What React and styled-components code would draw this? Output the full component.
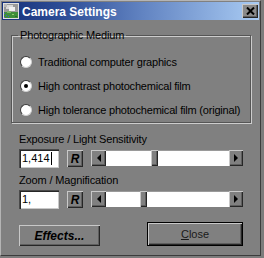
import React from 'react';
import styled, { createGlobalStyle } from 'styled-components';

const GlobalStyle = createGlobalStyle`
  html, body {
    margin: 0;
    background: #7c7c7c;
  }
  body {
    font-family: 'Liberation Sans', Arial, sans-serif;
    color: #000;
  }
`;

const raised = `
  background: #808080;
  box-shadow: inset 1px 1px 0 #c8c8c8, inset -1px -1px 0 #262626, inset -2px -2px 0 #5e5e5e;
`;

const sunken = `
  box-shadow: inset 1px 1px 0 #4a4a4a, inset 2px 2px 0 #262626, inset -1px -1px 0 #c8c8c8;
`;

const Window = styled.div`
  width: 261px;
  height: 256px;
  box-sizing: border-box;
  padding: 1px 0 0 1px;
  background: #808080;
  display: flex;
  flex-direction: column;
  border-left: 1px solid #b4b4b4;
  border-top: 1px solid #b4b4b4;
  border-right: 1px solid #3c3c3c;
  border-bottom: 1px solid #3c3c3c;
`;

const TitleBar = styled.div`
  width: 257px;
  height: 18px;
  display: flex;
  align-items: center;
  padding: 0 1px 0 1px;
  box-sizing: border-box;
  background: linear-gradient(90deg, #16317a 0%, #2f4f98 25%, #6284c2 55%, #a9cbf3 100%);
`;

const Title = styled.div`
  flex: 1;
  margin-left: 3px;
  padding-top: 2px;
  font-size: 12px;
  font-weight: bold;
  line-height: 14px;
  color: #fff;
  white-space: nowrap;
`;

const CloseBox = styled.div`
  width: 16px;
  height: 14px;
  display: flex;
  align-items: center;
  justify-content: center;
  ${raised}
  background: #8a8a8a;
`;

const Body = styled.div`
  display: flex;
  flex-direction: column;
  padding: 9px 0 0 9px;
`;

const Group = styled.fieldset`
  width: 240px;
  box-sizing: border-box;
  margin: 0;
  padding: 0 0 0 6px;
  border: 1px solid #565656;
  box-shadow: inset 1px 1px 0 #cdcdcd, 1px 1px 0 #cdcdcd;
`;

const Legend = styled.legend`
  padding: 0 2px;
  font-size: 11px;
  letter-spacing: -0.15px;
  line-height: 13px;
`;

const RadioList = styled.div`
  display: flex;
  flex-direction: column;
  padding-top: 8px;
`;

const RadioRow = styled.div`
  height: 24px;
  display: flex;
  align-items: center;
  padding-left: 2px;
  font-size: 11px;
  letter-spacing: -0.2px;
  gap: 6px;
  white-space: nowrap;
`;

const RadioDot = styled.span`
  width: 12px;
  height: 12px;
  border-radius: 50%;
  box-sizing: border-box;
  background: #fff;
  border: 1px solid;
  border-color: #3a3a3a #d0d0d0 #d0d0d0 #3a3a3a;
  display: flex;
  align-items: center;
  justify-content: center;

  &::after {
    content: '';
    width: 4px;
    height: 4px;
    border-radius: 50%;
    background: ${p => (p.$checked ? '#000' : 'transparent')};
  }
`;

const Section = styled.div`
  margin-left: 8px;
  display: flex;
  flex-direction: column;
`;

const Label = styled.div`
  margin-top: ${p => p.$top}px;
  font-size: 11px;
  letter-spacing: -0.15px;
  line-height: 13px;
  white-space: nowrap;
`;

const Row = styled.div`
  display: flex;
  align-items: flex-start;
  gap: 8px;
  margin-top: 3px;
  height: 19px;
`;

const Field = styled.div`
  width: 40px;
  height: 19px;
  box-sizing: border-box;
  background: #fff;
  ${sunken}
  padding: 0 0 0 3px;
  font-size: 11px;
  line-height: 19px;
  display: flex;
  align-items: center;
`;

const Caret = styled.span`
  width: 1px;
  height: 13px;
  background: #000;
  margin-left: 1px;
`;

const ResetButton = styled.div`
  width: 16px;
  height: 17px;
  margin-top: 1px;
  ${raised}
  display: flex;
  align-items: center;
  justify-content: center;
  font-size: 12px;
  font-weight: bold;
  font-style: italic;
`;

const Slider = styled.div`
  width: 152px;
  height: 16px;
  margin-top: 1px;
  display: flex;
`;

const ArrowButton = styled.div`
  width: ${p => p.$w}px;
  height: 16px;
  ${raised}
  display: flex;
  align-items: center;
  justify-content: center;

  &::after {
    content: '';
    border-top: 4px solid transparent;
    border-bottom: 4px solid transparent;
    ${p => (p.$dir === 'left' ? 'border-right: 4px solid #000;' : 'border-left: 4px solid #000;')}
  }
`;

const Track = styled.div`
  flex: 1;
  position: relative;
  background: #fff;
  box-shadow: inset 0 1px 0 #9a9a9a;
`;

const Thumb = styled.div`
  position: absolute;
  top: 0;
  width: 7px;
  height: 16px;
  ${raised}
`;

const ButtonRow = styled.div`
  margin-top: 13px;
  width: 224px;
  display: flex;
  justify-content: space-between;
  align-items: flex-end;
`;

const EffectsButton = styled.div`
  width: 81px;
  height: 21px;
  ${raised}
  display: flex;
  align-items: center;
  justify-content: center;
  font-size: 12px;
  font-weight: bold;
  font-style: italic;
`;

const CloseButton = styled.div`
  width: 96px;
  height: 24px;
  box-sizing: border-box;
  border: 1px solid #000;
  ${raised}
  display: flex;
  align-items: center;
  justify-content: center;
  font-size: 11px;
  color: #1a1a1a;

  u {
    text-decoration: underline;
  }
`;

const AppIcon = () => (
  <svg width="16" height="16" viewBox="0 0 16 16">
    <rect width="16" height="16" fill="#9a9a9a" />
    <rect x="3" y="2" width="7" height="4" fill="#d8d8d8" />
    <rect x="6" y="4" width="6" height="4" fill="#f0f0f0" />
    <rect x="1" y="1" width="3" height="3" fill="#b8b8b8" />
    <rect x="0" y="9" width="16" height="7" fill="#3f8f3a" />
    <rect x="4" y="8" width="4" height="2" fill="#7fb36a" />
    <rect x="1" y="10" width="1" height="1" fill="#3d4fd8" />
    <rect x="3" y="12" width="1" height="1" fill="#3d4fd8" />
    <rect x="1" y="14" width="1" height="1" fill="#6a4ad0" />
    <rect x="5" y="13" width="1" height="1" fill="#3d4fd8" />
    <rect x="9" y="11" width="2" height="1" fill="#8fd070" />
    <rect x="12" y="13" width="2" height="1" fill="#2a6a2a" />
    <rect x="0.5" y="0.5" width="15" height="15" fill="none" stroke="#e0e0e0" strokeWidth="1" />
  </svg>
);

const XGlyph = () => (
  <svg width="9" height="8" viewBox="0 0 9 8">
    <path d="M1 0.5 L8 7.5 M8 0.5 L1 7.5" stroke="#000" strokeWidth="2" />
  </svg>
);

const media = [
  { label: 'Traditional computer graphics', checked: false },
  { label: 'High contrast photochemical film', checked: true },
  { label: 'High tolerance photochemical film (original)', checked: false },
];

const ValueSlider = ({ value }) => (
  <Slider>
    <ArrowButton $w={15} $dir="left" />
    <Track>
      <Thumb style={{ left: `${Math.round(value * 116)}px` }} />
    </Track>
    <ArrowButton $w={14} $dir="right" />
  </Slider>
);

export default function App() {
  return (
    <>
      <GlobalStyle />
      <Window>
        <TitleBar>
          <AppIcon />
          <Title>Camera Settings</Title>
          <CloseBox>
            <XGlyph />
          </CloseBox>
        </TitleBar>
        <Body>
          <Group>
            <Legend>Photographic Medium</Legend>
            <RadioList>
              {media.map(m => (
                <RadioRow key={m.label}>
                  <RadioDot $checked={m.checked} />
                  {m.label}
                </RadioRow>
              ))}
            </RadioList>
          </Group>
          <Section>
            <Label $top={10}>Exposure / Light Sensitivity</Label>
            <Row>
              <Field>
                1,414
                <Caret />
              </Field>
              <ResetButton>R</ResetButton>
              <ValueSlider value={0.388} />
            </Row>
            <Label $top={6}>Zoom / Magnification</Label>
            <Row>
              <Field>1,</Field>
              <ResetButton>R</ResetButton>
              <ValueSlider value={0.293} />
            </Row>
            <ButtonRow>
              <EffectsButton>Effects...</EffectsButton>
              <CloseButton>
                <span><u>C</u>lose</span>
              </CloseButton>
            </ButtonRow>
          </Section>
        </Body>
      </Window>
    </>
  );
}
